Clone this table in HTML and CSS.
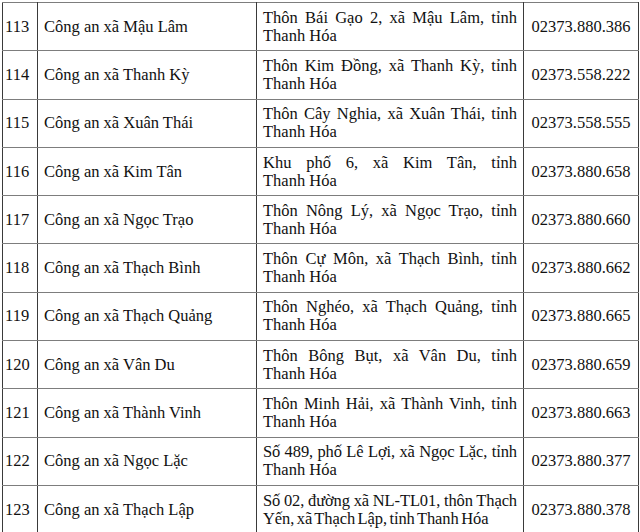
FILE: index.html
```html
<!DOCTYPE html>
<html lang="vi">
<head>
<meta charset="utf-8">
<title>Danh bạ Công an xã</title>
<link rel="stylesheet" href="styles.css">
</head>
<body>
<table class="tbl">
  <colgroup>
    <col class="c-no"><col class="c-name"><col class="c-addr"><col class="c-tel">
  </colgroup>
  <tbody>
    <tr><td class="no">113</td><td class="name">Công an xã Mậu Lâm</td><td class="addr"><span class="l1">Thôn Bái Gạo 2, xã Mậu Lâm, tỉnh</span><span class="l2">Thanh Hóa</span></td><td class="tel">02373.880.386</td></tr>
    <tr><td class="no">114</td><td class="name">Công an xã Thanh Kỳ</td><td class="addr"><span class="l1">Thôn Kim Đồng, xã Thanh Kỳ, tỉnh</span><span class="l2">Thanh Hóa</span></td><td class="tel">02373.558.222</td></tr>
    <tr><td class="no">115</td><td class="name">Công an xã Xuân Thái</td><td class="addr"><span class="l1">Thôn Cây Nghia, xã Xuân Thái, tỉnh</span><span class="l2">Thanh Hóa</span></td><td class="tel">02373.558.555</td></tr>
    <tr><td class="no">116</td><td class="name">Công an xã Kim Tân</td><td class="addr"><span class="l1">Khu phố 6, xã Kim Tân, tỉnh</span><span class="l2">Thanh Hóa</span></td><td class="tel">02373.880.658</td></tr>
    <tr><td class="no">117</td><td class="name">Công an xã Ngọc Trạo</td><td class="addr"><span class="l1">Thôn Nông Lý, xã Ngọc Trạo, tỉnh</span><span class="l2">Thanh Hóa</span></td><td class="tel">02373.880.660</td></tr>
    <tr><td class="no">118</td><td class="name">Công an xã Thạch Bình</td><td class="addr"><span class="l1">Thôn Cự Môn, xã Thạch Bình, tỉnh</span><span class="l2">Thanh Hóa</span></td><td class="tel">02373.880.662</td></tr>
    <tr><td class="no">119</td><td class="name">Công an xã Thạch Quảng</td><td class="addr"><span class="l1">Thôn Nghéo, xã Thạch Quảng, tỉnh</span><span class="l2">Thanh Hóa</span></td><td class="tel">02373.880.665</td></tr>
    <tr><td class="no">120</td><td class="name">Công an xã Vân Du</td><td class="addr"><span class="l1">Thôn Bông Bụt, xã Vân Du, tỉnh</span><span class="l2">Thanh Hóa</span></td><td class="tel">02373.880.659</td></tr>
    <tr><td class="no">121</td><td class="name">Công an xã Thành Vinh</td><td class="addr"><span class="l1">Thôn Minh Hải, xã Thành Vinh, tỉnh</span><span class="l2">Thanh Hóa</span></td><td class="tel">02373.880.663</td></tr>
    <tr><td class="no">122</td><td class="name">Công an xã Ngọc Lặc</td><td class="addr"><span class="l1 tight">Số 489, phố Lê Lợi, xã Ngọc Lặc, tỉnh</span><span class="l2">Thanh Hóa</span></td><td class="tel">02373.880.377</td></tr>
    <tr><td class="no">123</td><td class="name">Công an xã Thạch Lập</td><td class="addr"><span class="l1 tight">Số 02, đường xã NL-TL01, thôn Thạch</span><span class="l2 tight">Yến, xã Thạch Lập, tỉnh Thanh Hóa</span></td><td class="tel">02373.880.378</td></tr>
  </tbody>
</table>
</body>
</html>
```

FILE: styles.css
```css
html, body {
  margin: 0;
  padding: 0;
  background: #fff;
}
body {
  padding: 2px 0 0 2px;
  font-family: "Liberation Serif", "Times New Roman", serif;
  font-size: 16.5px;
  color: #111;
}
.tbl {
  border-collapse: collapse;
  table-layout: fixed;
  width: 636px;
}
.c-no { width: 35px; }
.c-name { width: 219px; }
.c-addr { width: 267px; }
.c-tel { width: 115px; }
.tbl tr {
  height: 48.3px;
}
.tbl td {
  border-top: 1px solid #7d7d7d;
  border-bottom: 1px solid #7d7d7d;
  border-left: 1px solid #3a3a3a;
  border-right: 1px solid #3a3a3a;
  padding: 0 6px;
  vertical-align: middle;
  line-height: 18px;
}
.tbl td.no {
  padding: 0 2px;
}
.tbl td.tel {
  text-align: center;
  padding: 0 4px;
}
.l1, .l2 {
  display: block;
  white-space: nowrap;
}
.l1 {
  text-align: justify;
  text-align-last: justify;
}
.tight {
  word-spacing: -1.5px;
  letter-spacing: -0.1px;
}
```
